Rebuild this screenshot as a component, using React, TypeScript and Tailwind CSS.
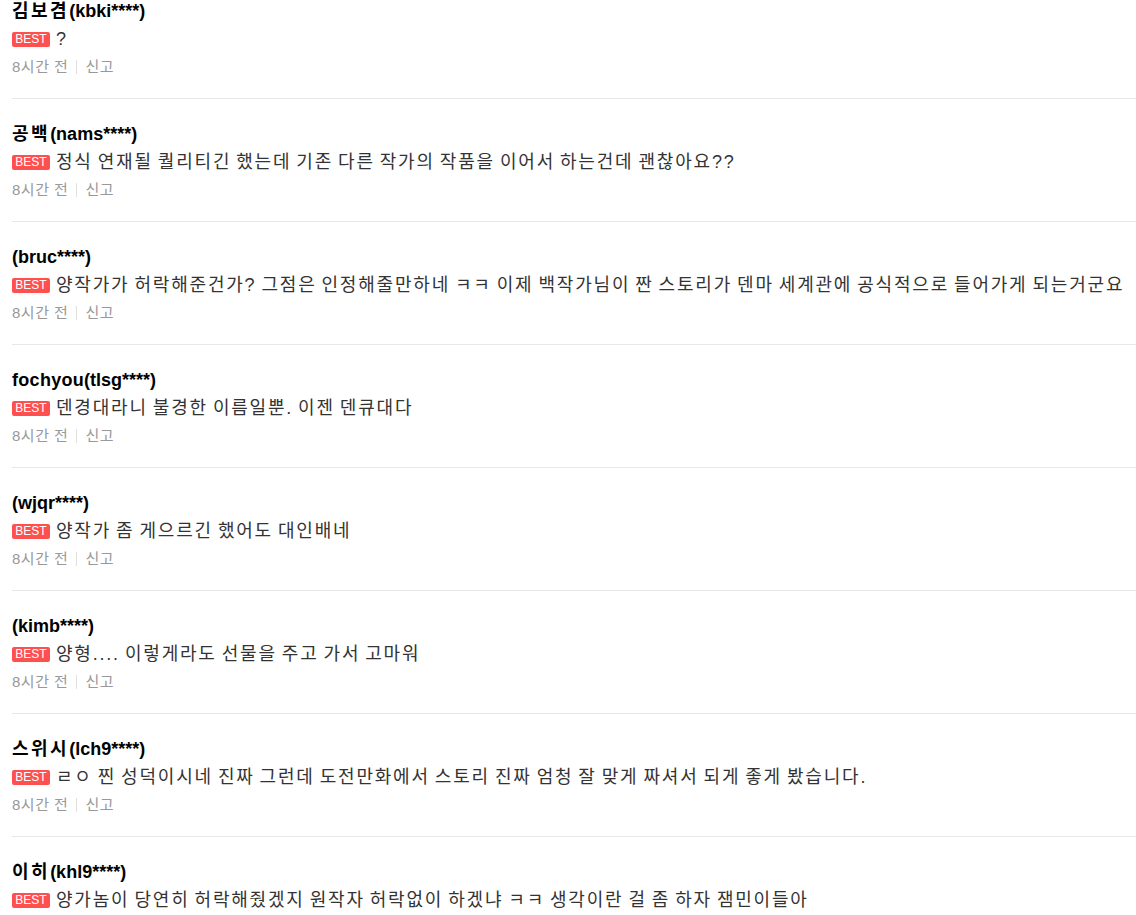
const comments = [
  { nick: "김보겸", id: "(kbki****)", text: "?" },
  { nick: "공백", id: "(nams****)", text: "정식 연재될 퀄리티긴 했는데 기존 다른 작가의 작품을 이어서 하는건데 괜찮아요??" },
  { nick: "", id: "(bruc****)", text: "양작가가 허락해준건가? 그점은 인정해줄만하네 ㅋㅋ 이제 백작가님이 짠 스토리가 덴마 세계관에 공식적으로 들어가게 되는거군요" },
  { nick: "fochyou", id: "(tlsg****)", text: "덴경대라니 불경한 이름일뿐. 이젠 덴큐대다" },
  { nick: "", id: "(wjqr****)", text: "양작가 좀 게으르긴 했어도 대인배네" },
  { nick: "", id: "(kimb****)", text: "양형.... 이렇게라도 선물을 주고 가서 고마워" },
  { nick: "스위시", id: "(lch9****)", text: "ㄹㅇ 찐 성덕이시네 진짜 그런데 도전만화에서 스토리 진짜 엄청 잘 맞게 짜셔서 되게 좋게 봤습니다." },
  { nick: "이히", id: "(khl9****)", text: "양가놈이 당연히 허락해줬겠지 원작자 허락없이 하겠냐 ㅋㅋ 생각이란 걸 좀 하자 잼민이들아" },
];

const isHangul = (s: string) => /[\uac00-\ud7a3]/.test(s);

export default function App() {
  return (
    <div
      className="h-[915px] overflow-hidden bg-white"
      style={{ fontFamily: '"Liberation Sans", "Noto Sans CJK KR", sans-serif' }}
    >
      <ul className="-mt-[24px] pl-3">
        {comments.map((c) => (
          <li key={c.id} className="border-b border-[#e8e8e8] pt-[25px] pb-[21px]">
            <div className="h-5 text-[18px] leading-5 font-bold text-black whitespace-nowrap">
              <span className={isHangul(c.nick) ? "tracking-[2.5px]" : "tracking-[0.3px]"}>{c.nick}</span>
              <span>{c.id}</span>
            </div>
            <div className="mt-[6px] flex h-6 items-center text-[18px] leading-6 text-[#333] tracking-[1.8px] [word-spacing:-1.8px]">
              <span className="mr-[6px] flex h-[15px] w-[38px] shrink-0 items-center justify-center rounded-[2px] bg-[#ff5050] text-[12px] leading-none tracking-normal text-white [word-spacing:0]">
                BEST
              </span>
              <span className="whitespace-nowrap">{c.text}</span>
            </div>
            <div className="mt-[6px] flex h-5 items-center text-[15px] leading-5 text-[#999] tracking-[0.5px]">
              <span>8시간 전</span>
              <span className="mx-[8px] h-[14px] w-px bg-[#e0e0e0]" />
              <span>신고</span>
            </div>
          </li>
        ))}
      </ul>
    </div>
  );
}
